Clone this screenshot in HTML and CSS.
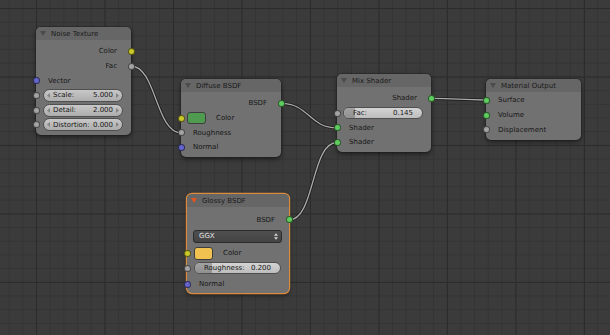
FILE: index.html
```html
<!DOCTYPE html>
<html lang="en">
<head>
    <meta charset="UTF-8">
    <meta name="viewport" content="width=device-width, initial-scale=1.0">
    <title>Node Editor</title>
    <link rel="stylesheet" href="styles.css">
</head>
<body>
<div class="editor">
    <!-- links are drawn under the nodes -->
    <svg class="links" width="610" height="335" viewBox="0 0 610 335">
        <g class="link-outline">
            <path d="M131 66 C156 66 156 132.8 181 132.8"/>
            <path d="M281 103.4 C309 103.4 309 127.8 337 127.8"/>
            <path d="M289 220 C315 220 311 142.5 337 142.5"/>
            <path d="M431 98.4 C458 98.4 459 100 486 100"/>
        </g>
        <g class="link-core">
            <path d="M131 66 C156 66 156 132.8 181 132.8"/>
            <path d="M281 103.4 C309 103.4 309 127.8 337 127.8"/>
            <path d="M289 220 C315 220 311 142.5 337 142.5"/>
            <path d="M431 98.4 C458 98.4 459 100 486 100"/>
        </g>
    </svg>

    <div class="node noise">
        <div class="node-header">
            <svg class="caret" viewBox="0 0 6 5"><path d="M0 0H6L3 5z"/></svg>Noise Texture
        </div>
        <div class="node-body">
            <div class="row out"><span>Color</span><i class="socket yellow"></i></div>
            <div class="row out"><span>Fac</span><i class="socket gray"></i></div>
            <div class="row in"><i class="socket blue"></i><span>Vector</span></div>
            <div class="row in field">
                <i class="socket gray"></i>
                <div class="num">
                    <svg class="arr" viewBox="0 0 3 5"><path d="M3 0L0 2.5L3 5z"/></svg>
                    <span class="num-label">Scale:</span>
                    <span class="num-value">5.000</span>
                    <svg class="arr" viewBox="0 0 3 5"><path d="M0 0L3 2.5L0 5z"/></svg>
                </div>
            </div>
            <div class="row in field">
                <i class="socket gray"></i>
                <div class="num">
                    <svg class="arr" viewBox="0 0 3 5"><path d="M3 0L0 2.5L3 5z"/></svg>
                    <span class="num-label">Detail:</span>
                    <span class="num-value">2.000</span>
                    <svg class="arr" viewBox="0 0 3 5"><path d="M0 0L3 2.5L0 5z"/></svg>
                </div>
            </div>
            <div class="row in field">
                <i class="socket gray"></i>
                <div class="num">
                    <svg class="arr" viewBox="0 0 3 5"><path d="M3 0L0 2.5L3 5z"/></svg>
                    <span class="num-label">Distortion:</span>
                    <span class="num-value">0.000</span>
                    <svg class="arr" viewBox="0 0 3 5"><path d="M0 0L3 2.5L0 5z"/></svg>
                </div>
            </div>
        </div>
    </div>

    <div class="node diffuse">
        <div class="node-header">
            <svg class="caret" viewBox="0 0 6 5"><path d="M0 0H6L3 5z"/></svg>Diffuse BSDF
        </div>
        <div class="node-body">
            <div class="row out"><span>BSDF</span><i class="socket green"></i></div>
            <div class="row in color-row">
                <i class="socket yellow"></i>
                <span class="swatch swatch-green"></span>
                <span class="swatch-label">Color</span>
            </div>
            <div class="row in"><i class="socket gray"></i><span>Roughness</span></div>
            <div class="row in"><i class="socket blue"></i><span>Normal</span></div>
        </div>
    </div>

    <div class="node mix">
        <div class="node-header">
            <svg class="caret" viewBox="0 0 6 5"><path d="M0 0H6L3 5z"/></svg>Mix Shader
        </div>
        <div class="node-body">
            <div class="row out"><span>Shader</span><i class="socket green"></i></div>
            <div class="row in field slim">
                <i class="socket gray"></i>
                <div class="slider">
                    <span class="slider-fill" style="width:14.5%"></span>
                    <span class="num-label">Fac:</span>
                    <span class="num-value">0.145</span>
                </div>
            </div>
            <div class="row in"><i class="socket green"></i><span>Shader</span></div>
            <div class="row in"><i class="socket green"></i><span>Shader</span></div>
        </div>
    </div>

    <div class="node output">
        <div class="node-header">
            <svg class="caret" viewBox="0 0 6 5"><path d="M0 0H6L3 5z"/></svg>Material Output
        </div>
        <div class="node-body tight">
            <div class="row in"><i class="socket green"></i><span>Surface</span></div>
            <div class="row in"><i class="socket green"></i><span>Volume</span></div>
            <div class="row in"><i class="socket gray"></i><span>Displacement</span></div>
        </div>
    </div>

    <div class="node glossy selected">
        <div class="node-header">
            <svg class="caret active" viewBox="0 0 6 5"><path d="M0 0H6L3 5z"/></svg>Glossy BSDF
        </div>
        <div class="node-body glossy-body">
            <div class="row out"><span>BSDF</span><i class="socket green"></i></div>
            <div class="row menu-row">
                <div class="menu">
                    <span>GGX</span>
                    <svg class="updown" viewBox="0 0 5 8"><path d="M2.5 0L5 3H0z M0 5H5L2.5 8z"/></svg>
                </div>
            </div>
            <div class="row in color-row wide">
                <i class="socket yellow"></i>
                <span class="swatch swatch-yellow"></span>
                <span class="swatch-label">Color</span>
            </div>
            <div class="row in field">
                <i class="socket gray"></i>
                <div class="slider">
                    <span class="slider-fill" style="width:20%"></span>
                    <span class="num-label">Roughness:</span>
                    <span class="num-value">0.200</span>
                </div>
            </div>
            <div class="row in last"><i class="socket blue"></i><span>Normal</span></div>
        </div>
    </div>
</div>
</body>
</html>
```

FILE: styles.css
```css
/* Node editor canvas */
* {
    box-sizing: border-box;
}

body {
    margin: 0;
    background-color: #3b3b3b;
    font-family: "DejaVu Sans", sans-serif;
    font-size: 7px;
    color: #171717;
}

.editor {
    position: relative;
    width: 610px;
    height: 335px;
    overflow: hidden;
    background-color: #3b3b3b;
    background-image:
        linear-gradient(to right, #2c2c2c 1px, transparent 1px),
        linear-gradient(to bottom, #2c2c2c 1px, transparent 1px),
        linear-gradient(to right, #343434 1px, transparent 1px),
        linear-gradient(to bottom, #343434 1px, transparent 1px);
    background-size: 68.5px 68.5px, 68.5px 68.5px, 13.7px 13.7px, 13.7px 13.7px;
    background-position: 36px 8px;
}

.links {
    position: absolute;
    left: 0;
    top: 0;
}

.links path {
    fill: none;
}

.link-outline path {
    stroke: #1d1d1d;
    stroke-width: 3;
}

.link-core path {
    stroke: #aaaaaa;
    stroke-width: 1.3;
}

/* nodes */
.node {
    position: absolute;
    background-color: #717171;
    border-radius: 5px;
    box-shadow: 0 0 0 1px rgba(25, 25, 25, 0.35), 0 2px 5px rgba(0, 0, 0, 0.5);
}

.node.selected {
    box-shadow: 0 0 0 1.2px #dc8a3c, 0 2px 5px rgba(0, 0, 0, 0.5);
}

.noise   { left: 36px;  top: 27px;  width: 95px; }
.diffuse { left: 181px; top: 79px;  width: 100px; }
.mix     { left: 337px; top: 74px;  width: 94px; }
.output  { left: 486px; top: 79px;  width: 95px; }
.glossy  { left: 187px; top: 194px; width: 102px; }

.node-header {
    height: 13px;
    display: flex;
    align-items: center;
    padding-left: 4px;
    background-color: #666666;
    border-radius: 5px 5px 0 0;
    color: #1a1a1a;
}

.caret {
    width: 6px;
    height: 5px;
    margin-right: 5px;
    fill: #4b4b4b;
}

.caret.active {
    fill: #e0541f;
}

.node-body {
    padding: 4px 0 2.5px;
}

.node-body.tight {
    padding-top: 1px;
}

.node-body.glossy-body {
    padding: 5.6px 0 1.6px;
}

.row {
    position: relative;
    height: 14.7px;
    display: flex;
    align-items: center;
    padding: 0 12px;
    white-space: nowrap;
}

.row.out {
    justify-content: flex-end;
    padding-right: 14px;
}

.row.field {
    padding: 0 8px 0 7px;
}

.row.slim {
    padding-left: 6px;
}

.row.menu-row {
    height: 13px;
    margin: 2.7px 0 3px;
    padding: 0 7px 0 6px;
}

.row.color-row {
    padding-left: 6px;
}

.row.color-row.wide {
    padding-left: 7px;
}

.row.last {
    margin-top: 1.6px;
}

/* sockets */
.socket {
    position: absolute;
    top: 50%;
    width: 7px;
    height: 7px;
    margin-top: -3.5px;
    border-radius: 50%;
    border: 1px solid rgba(0, 0, 0, 0.55);
}

.row.out .socket { right: -3.5px; }
.row.in .socket  { left: -3.5px; }

.yellow { background-color: #c9c92a; }
.gray   { background-color: #a3a3a3; }
.blue   { background-color: #6464cc; }
.green  { background-color: #5fcc5f; }

/* number fields */
.num {
    flex: 1;
    height: 13px;
    display: flex;
    align-items: center;
    padding: 0 3px;
    border: 1px solid #4f4f4f;
    border-radius: 6.5px;
    background: linear-gradient(#c8c8c8, #adadad);
}

.arr {
    width: 3px;
    height: 5px;
    fill: #848484;
}

.num .num-label {
    margin-left: 3px;
}

.num .num-value {
    margin-left: auto;
    margin-right: 3px;
}

.slider {
    position: relative;
    flex: 1;
    height: 12.5px;
    display: flex;
    align-items: center;
    padding: 0 9px;
    overflow: hidden;
    border: 1px solid #4f4f4f;
    border-radius: 6.25px;
    background: linear-gradient(#d4d4d4, #bdbdbd);
}

.slider-fill {
    position: absolute;
    left: 0;
    top: 0;
    bottom: 0;
    background: linear-gradient(#a2a2a2, #909090);
}

.slider .num-label,
.slider .num-value {
    position: relative;
}

.slider .num-value {
    margin-left: auto;
}

/* dropdown */
.menu {
    flex: 1;
    height: 13px;
    display: flex;
    align-items: center;
    justify-content: space-between;
    padding: 0 3px 0 5px;
    border: 1px solid #2b2b2b;
    border-radius: 3px;
    background: linear-gradient(#4f4f4f, #444444);
    color: #e4e4e4;
}

.updown {
    width: 4px;
    height: 7px;
    fill: #d8d8d8;
}

/* colour swatches */
.swatch {
    width: 19px;
    height: 12.5px;
    border: 1px solid #3e3e3e;
    border-radius: 3px;
}

.swatch-green  { background-color: #4f9b4f; }
.swatch-yellow { background-color: #f1c24f; }

.swatch-label {
    margin-left: 10px;
}
```
